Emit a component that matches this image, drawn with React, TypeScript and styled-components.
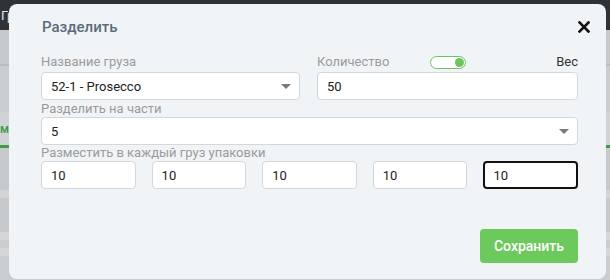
import { useState } from 'react'
import styled, { createGlobalStyle } from 'styled-components'

const GlobalStyle = createGlobalStyle`
  html, body {
    margin: 0;
    padding: 0;
    width: 610px;
    height: 280px;
    overflow: hidden;
    font-family: Roboto, "Liberation Sans", sans-serif;
  }
`

const Page = styled.div`
  position: relative;
  width: 610px;
  height: 280px;
  display: flex;
  flex-direction: column;
  background: #c9cdd0;
`
const TopBar = styled.div`
  height: 30px;
  background: #2f3338;
  color: #e6e6e6;
  font-size: 13px;
  display: flex;
  align-items: center;
  padding-left: 1px;
`
const Side = styled.div`
  flex: 1;
  display: flex;
  flex-direction: column;
`
const SideBand = styled.div<{ $h: number; $bg: string }>`
  height: ${p => p.$h}px;
  background: ${p => p.$bg};
  color: #3a9a4a;
  font-size: 12px;
  font-weight: 500;
  display: flex;
  align-items: center;
`

const Backdrop = styled.div`
  position: absolute;
  inset: 0;
  padding: 4px 4px 0 9px;
  display: flex;
`
const Modal = styled.div`
  flex: 1;
  height: 275px;
  background: #f1f4f7;
  border-radius: 8px;
  padding: 12px 28px 0 32px;
  box-sizing: border-box;
  display: flex;
  flex-direction: column;
`
const Header = styled.div`
  display: flex;
  justify-content: space-between;
  align-items: center;
  height: 22px;
  margin-bottom: 16px;
  margin-left: 1px;
`
const Title = styled.h2`
  margin: 0;
  font-size: 15px;
  font-weight: 500;
  color: #5a6b7c;
`
const Close = styled.button`
  border: 0;
  background: none;
  padding: 0;
  margin-right: -12px;
  display: flex;
  cursor: pointer;
`
const Row = styled.div`
  display: grid;
  grid-template-columns: 259px 261px;
  column-gap: 17px;
`
const Field = styled.div`
  display: flex;
  flex-direction: column;
`
const LabelRow = styled.div<{ $h?: number; $gap?: number }>`
  display: flex;
  align-items: center;
  justify-content: space-between;
  height: ${p => p.$h ?? 16}px;
  margin-bottom: ${p => p.$gap ?? 2}px;
`
const Label = styled.div<{ $dark?: boolean }>`
  font-size: 13px;
  line-height: 16px;
  color: ${p => (p.$dark ? '#333' : '#9b9b9b')};
`
const Box = styled.div<{ $focus?: boolean }>`
  height: 28px;
  background: #fff;
  border: ${p => (p.$focus ? '2px solid #111' : '1px solid #d3d8dd')};
  border-radius: 4px;
  box-sizing: border-box;
  display: flex;
  align-items: center;
  padding: 0 ${p => (p.$focus ? 8 : 9)}px;
  font-size: 13px;
  color: #222;
`
const Value = styled.span`
  flex: 1;
`
const Caret = styled.span`
  width: 0;
  height: 0;
  border-left: 5px solid transparent;
  border-right: 5px solid transparent;
  border-top: 5px solid #7a7a7a;
  margin-right: -1px;
`
const Toggle = styled.button<{ $on: boolean }>`
  width: 36px;
  height: 13px;
  border: 1px solid #6cc45b;
  border-radius: 7px;
  background: #fff;
  padding: 1px;
  display: flex;
  justify-content: ${p => (p.$on ? 'flex-end' : 'flex-start')};
  align-items: center;
  margin-left: 41px;
  margin-right: auto;
  cursor: pointer;
  box-sizing: border-box;
`
const Knob = styled.span`
  width: 9px;
  height: 9px;
  border-radius: 50%;
  background: #6cc45b;
`
const PartsRow = styled.div`
  display: grid;
  grid-template-columns: repeat(5, 1fr);
  column-gap: 16px;
`
const Footer = styled.div`
  display: flex;
  justify-content: flex-end;
  margin-top: 40px;
`
const SaveButton = styled.button`
  width: 98px;
  height: 34px;
  border: 0;
  border-radius: 4px;
  background: #6cc95b;
  color: #fff;
  font-family: Roboto, "Liberation Sans", sans-serif;
  font-size: 14px;
  font-weight: 500;
  cursor: pointer;
`

export default function App() {
  const [byWeight, setByWeight] = useState(true)
  const parts = ['10', '10', '10', '10', '10']

  return (
    <>
      <GlobalStyle />
      <Page>
        <TopBar>Гр</TopBar>
        <Side>
          <SideBand $h={34} $bg="#c6cacd" />
          <SideBand $h={2} $bg="#b8bcbf" />
          <SideBand $h={46} $bg="#c9cdd0" />
          <SideBand $h={33} $bg="#d0d3d5">мн</SideBand>
          <SideBand $h={3} $bg="#3f9a4a" />
          <SideBand $h={42} $bg="#c6cacd" />
          <SideBand $h={8} $bg="#d2d4d6" />
          <SideBand $h={34} $bg="#c6cacd" />
          <SideBand $h={8} $bg="#d4d6d8" />
          <SideBand $h={8} $bg="#c9cdd0" />
          <SideBand $h={8} $bg="#d4d6d8" />
        </Side>
        <Backdrop>
          <Modal>
            <Header>
              <Title>Разделить</Title>
              <Close aria-label="close">
                <svg width="12" height="12" viewBox="0 0 12 12">
                  <path d="M1.5 1.5 L10.5 10.5 M10.5 1.5 L1.5 10.5" stroke="#111" strokeWidth="2.6" strokeLinecap="square" />
                </svg>
              </Close>
            </Header>
            <Row>
              <Field>
                <LabelRow>
                  <Label>Название груза</Label>
                </LabelRow>
                <Box>
                  <Value>52-1 - Prosecco</Value>
                  <Caret />
                </Box>
              </Field>
              <Field>
                <LabelRow>
                  <Label>Количество</Label>
                  <Toggle $on={byWeight} onClick={() => setByWeight(!byWeight)}>
                    <Knob />
                  </Toggle>
                  <Label $dark>Вес</Label>
                </LabelRow>
                <Box>
                  <Value>50</Value>
                </Box>
              </Field>
            </Row>
            <Field>
              <LabelRow $h={17} $gap={0}>
                <Label>Разделить на части</Label>
              </LabelRow>
              <Box>
                <Value>5</Value>
                <Caret />
              </Box>
            </Field>
            <Field>
              <LabelRow $gap={0}>
                <Label>Разместить в каждый груз упаковки</Label>
              </LabelRow>
              <PartsRow>
                {parts.map((p, i) => (
                  <Box key={i} $focus={i === parts.length - 1}>
                    <Value>{p}</Value>
                  </Box>
                ))}
              </PartsRow>
            </Field>
            <Footer>
              <SaveButton>Сохранить</SaveButton>
            </Footer>
          </Modal>
        </Backdrop>
      </Page>
    </>
  )
}
